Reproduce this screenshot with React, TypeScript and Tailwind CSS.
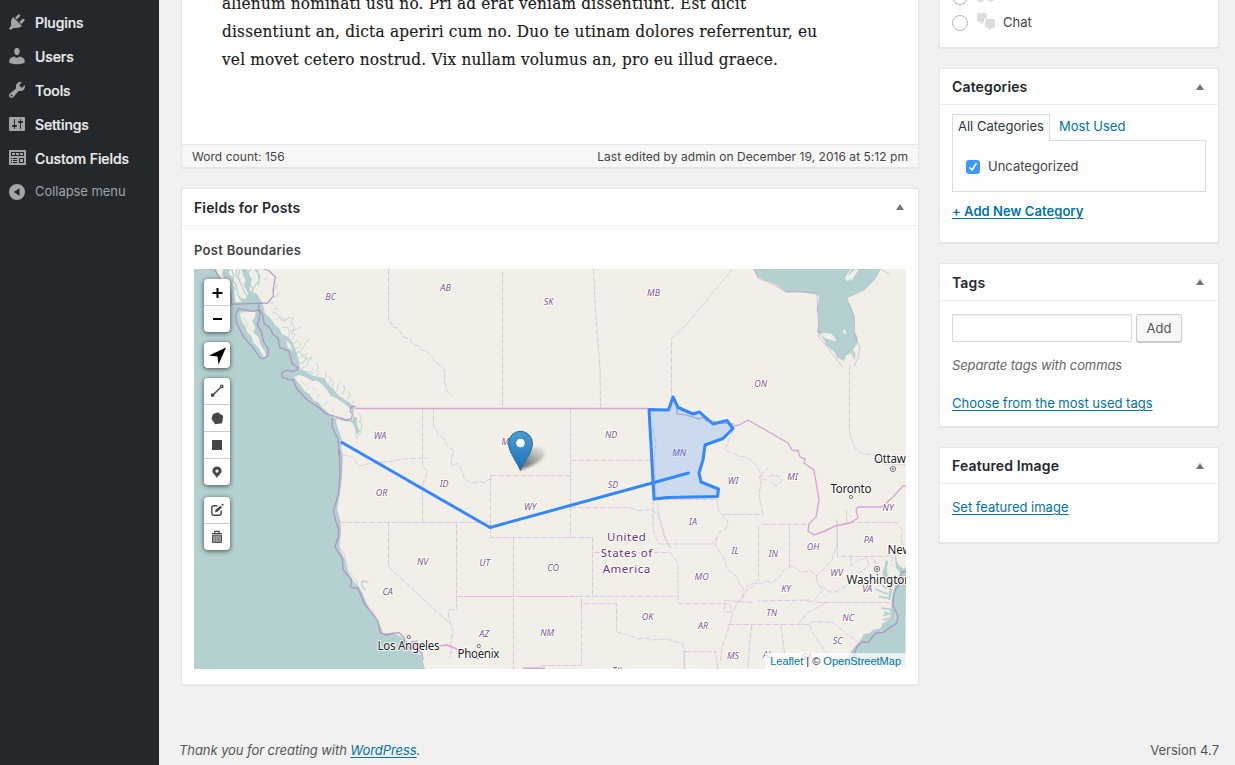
import React from "react";

type Kids = { children?: React.ReactNode };

const menu = [
  {
    label: "Plugins",
    d: "M13.11 4.36L9.87 7.6 8 5.73l3.24-3.24c.35-.34 1.05-.2 1.56.32.52.51.66 1.21.31 1.55zm-8 1.77l.91-1.12 9.01 9.01-1.19.84c-.71.71-2.63 1.16-3.82 1.16H6.14L4.9 17.26c-.59.59-1.54.59-2.12 0-.59-.58-.59-1.53 0-2.12l1.24-1.24v-3.88c0-1.13.4-3.19 1.09-3.89zm7.26 3.97l3.24-3.24c.34-.35 1.04-.21 1.55.31.52.51.66 1.21.31 1.55l-3.24 3.25z",
  },
  {
    label: "Users",
    d: "M10 9.25c-2.27 0-2.73-3.44-2.73-3.44C7 4.02 7.82 2 9.97 2c2.16 0 2.98 2.02 2.71 3.81 0 0-.41 3.44-2.68 3.44zM7.6 10.6C8.3 11.5 9.100 12 10 12s1.700-.5 2.400-1.400c3 .2 5.300 2.200 5.300 4.300v1.800s-3.400 1.500-7.700 1.500-7.700-1.500-7.700-1.500v-1.800c0-2.100 2.300-4.100 5.300-4.300z",
  },
  {
    label: "Tools",
    d: "M16.68 9.77c-1.34 1.34-3.3 1.67-4.95.99l-5.41 6.52c-.99.99-2.59.99-3.58 0s-.99-2.59 0-3.57l6.52-5.42c-.68-1.65-.35-3.61.99-4.95 1.28-1.28 3.12-1.62 4.72-1.06l-2.89 2.89 2.82 2.82 2.86-2.87c.53 1.58.18 3.39-1.08 4.65zM3.81 16.21c.4.39 1.04.39 1.43 0 .4-.4.4-1.04 0-1.43-.39-.4-1.03-.4-1.43 0-.39.39-.39 1.03 0 1.43z",
  },
  {
    label: "Settings",
    d: "M18 16V4c0-.55-.45-1-1-1H3c-.55 0-1 .45-1 1v12c0 .55.45 1 1 1h14c.55 0 1-.45 1-1zM8 11h1c.55 0 1 .45 1 1s-.45 1-1 1H8v1.5c0 .28-.22.5-.5.5s-.5-.22-.5-.5V13H6c-.55 0-1-.45-1-1s.45-1 1-1h1V5.5c0-.28.22-.5.5-.5s.5.22.5.5V11zm5-2h-1c-.55 0-1-.45-1-1s.45-1 1-1h1V5.5c0-.28.22-.5.5-.5s.5.22.5.5V7h1c.55 0 1 .45 1 1s-.45 1-1 1h-1v5.5c0 .28-.22.5-.5.5s-.5-.22-.5-.5V9z",
  },
  {
    label: "Custom Fields",
    d: "M2.5 2h16c.3 0 .5.2.5.5v14c0 .3-.2.5-.5.5h-16c-.3 0-.5-.2-.5-.5v-14c0-.3.2-.5.5-.5zM4 4v4h13V4zm1 1h3v2H5zm4 0h3v2H9zm4 0h3v2h-3zM4 10v1h1v-1zm2 0v1h4v-1zm-2 2v1h1v-1zm2 0v1h4v-1zm-2 2v1h1v-1zm2 0v1h4v-1zm6-4v5h5v-5zm1 1h3v3h-3z",
  },
];

const chatPath =
  "M11 6h-.82C9.07 6 8 7.2 8 8.16V10l-3 3v-3H3c-1.1 0-2-.9-2-2V3c0-1.1.9-2 2-2h6c1.1 0 2 .9 2 2v3zm0 1h6c1.1 0 2 .9 2 2v5c0 1.1-.9 2-2 2h-2v3l-3-3h-1c-1.1 0-2-.9-2-2V9c0-1.1.9-2 2-2z";

function Sidebar() {
  return (
    <nav className="h-full w-[159px] shrink-0 bg-[#23282d] pt-[5px] text-[14px] tracking-[-0.1px] text-[#eee]">
      {menu.map((m) => (
        <div key={m.label} className="flex h-[34px] items-center pl-[7px] font-medium [-webkit-text-stroke:0.2px]">
          <svg viewBox="0 0 20 20" className="mr-2 size-5 fill-[#a0a5aa] [-webkit-text-stroke:0]" fillRule="evenodd">
            <path d={m.d} />
          </svg>
          {m.label}
        </div>
      ))}
      <div className="flex h-[34px] items-center pl-[7px] text-[13px] tracking-[-0.05px] text-[#a0a5aa]">
        <svg viewBox="0 0 20 20" className="mr-2 size-5" fillRule="evenodd">
          <path fill="#a0a5aa" d="M10 2a8 8 0 1 1 0 16a8 8 0 0 1 0-16zM12.500 6.200L6.800 10L12.500 13.800z" />
        </svg>
        Collapse menu
      </div>
    </nav>
  );
}

function Card({ title, className, head, children }: Kids & { title: string; className: string; head: string }) {
  return (
    <section className={`border border-[#e5e5e5] bg-white shadow-[0_1px_1px_rgba(0,0,0,0.04)] ${className}`}>
      <header className={`flex items-center justify-between border-b border-[#eee] pr-[14px] pl-3 ${head}`}>
        <h2 className="text-[14px] font-semibold tracking-[0.14px] text-[#23282d]">{title}</h2>
        <svg viewBox="0 0 8 6" className="h-[6px] w-2 fill-[#72777c]">
          <path d="M4 0L8 6H0z" />
        </svg>
      </header>
      {children}
    </section>
  );
}

/* Map section drawn at three units per pixel with its own origin. */
function Tile({ x, y, children }: Kids & { x: number; y: number }) {
  return <g transform={`translate(${x} ${y}) scale(0.33333)`}>{children}</g>;
}

const states: [string, number, number][] = [
  ["BC", 331, 299.5], ["AB", 446, 291], ["SK", 549, 305], ["MB", 654, 296], ["ON", 761, 387],
  ["WA", 380.5, 438.5], ["OR", 382, 495.5], ["ID", 444.5, 487], ["MT", 508, 444.5], ["ND", 611.5, 438],
  ["SD", 613.5, 487.5], ["MN", 679.5, 455.5], ["WY", 530.5, 509.5], ["NV", 423, 564.5], ["CA", 388, 594.5],
  ["UT", 485, 565.5], ["CO", 553.5, 570.5], ["AZ", 484.5, 636.5], ["NM", 547.5, 635.5], ["OK", 648, 619.5],
  ["WI", 733.5, 484], ["MI", 793, 479.5], ["IA", 693.5, 524.5], ["IL", 735.5, 553.5], ["IN", 773.5, 556.5],
  ["OH", 813.5, 549.5], ["PA", 869, 542.5], ["NY", 888.5, 511], ["MO", 702, 579.5], ["KY", 786.5, 592],
  ["WV", 837, 575.5], ["VA", 867.5, 592], ["TN", 772, 616], ["NC", 848.5, 620.5], ["SC", 838, 643.5],
  ["AR", 703.5, 629], ["MS", 733.5, 659], ["AL", 768, 658], ["GA", 807, 659.5], ["TX", 617, 674],
];

const cities: [string, number, number, number][] = [
  ["Los Angeles", 408.5, 650.2, 62], ["Phoenix", 478.5, 658, 42], ["Toronto", 851, 493, 41],
  ["Washington", 879, 583.5, 65], ["Ottawa", 893, 463, 38], ["New York", 913, 554, 51],
];

function BaseMap() {
  return (
    <svg viewBox="194 269 712 400" className="absolute inset-0 size-full" fill="none">
      <rect x="194" y="269" width="712" height="400" fill="#f2efe9" />
      {/* Pacific */}
      <path
        fill="#b5d0d0"
        d="M194 269H247L252 279 249 290 257 294 262 302 265 313 271 319 276 326 282 331 288 337 293 343 296 351 299 361 300 370 307 374 314 377 322 379 326 384 332 390 338 395 344 399 351 404 354 409 353 416 357 418 357 426 360 431 357 435 354 426 352 422 344 421 336 419 337 426 340 434 342 440 341 450 343 455 342 477 340 493 337 510 340 520 341 530 339 547 345 560 347 570 353 581 357 585 362 592 367 604 370 611 376 618 381 627 383 633 393 633 401 637 408 642 415 650 421 656 425 669H194Z"
      />
      <Tile x={190} y={240}>
        <g fill="#f2efe9">
          <path d="M78 87l22 0-4 15 6 14-8 6-10-20zM120 87l35 0 4 18 8 14-4 20 12 22-10 16-18-5-5-23-15-15 6-18-18-14zM170 87l50 0 10 20 2 28-10 5 4 30-16 4-6-22-13-14 3-20-14-8zM132 145l12 8 2 18 10 15h-20zM148 218l24-3 25 0-2 16-9 11 10 21-6 14 15 14 7 24 13 20 3 15-8-2-14-24-17-18-4-17-14-14-7-19-10-14zM311 411l16-6 18 5 22 13 15-1 16 12 12 14 12 20 22 9 18 13 20 17 10 19-5 13-15 2-18-7-16 1-21-13-11-13-9-6-9-14-17-8-11-17-16-11-8-12z" />
          <path d="M226 150l12-10 7 17-10 22zM235 205l16 7-3 15-14-10zM245 230l16 10 7 18-17-8zM270 262l14 12 7 16-18-10zM288 300l14 14 5 20-14-13z" />
        </g>
        <g stroke="#b5d0d0" strokeWidth="2.4" strokeLinejoin="round">
          <path d="M113 90l8 25 18 20 5 30 12 20M125 87l6 20-8 12M140 87l-2 22 14 12M150 88l-6 25 14 30 16 35M180 87l-12 30 20 28-2 30M203 87l4 35-18 25M195 87l14 20-4 30M160 130l20 16M176 150l20 26" strokeWidth="3.500" />
          <path d="M232 115l-10 6M262 132l-6 14-10 8M247 172l14-4 5-12M240 190l12-5M248 208l10-4 8 6M246 216l18 8 8 14 16 8M260 240l12-10 6 6 14 4M286 243l8-10 17 1-9 12 10 16-6 22M276 262l17 0 7 20-8 14M300 275l22-8 15-8M302 300l8-6 6-14M306 312l18-10 8 8M312 326l16-4 6-10M316 338l20-8 9-20 16-14M322 336l20 10 12-5M318 355l20-8 10 12 20-9M326 372l18-8 6-16M332 386l18-8 5-16 11-7M345 396l20-2 5-10M353 404l20-6 12-14-4-14M378 408l9-7-5-12M400 420l8-10 0-14M414 436l8-14-3-13M423 446l9-17-4-8M440 455l4-20 8-6M455 465l10-18-6-12M470 480l10-14-5-11M484 496l8-14M496 508l9-6M505 520l8 8-4 20M508 540l8 12-4 26-8 12M500 560l-4 24 8 14" />
        </g>
        <path d="M332 390l34 20 35 8 10 17 18 16 18 25 26 12 20 17" stroke="#b5d0d0" strokeWidth="7" />
        <path d="M145 230l20 8 8 18-6 14M175 265l20 15M335 425l10 12 8-4M348 452l10-10M365 440l8 10 8-2M380 475l10-14M400 500l8-12 8 0M425 515l6-10" stroke="#c4dad7" strokeWidth="2.400" />
      </Tile>
      {/* San Francisco Bay */}
      <path d="M361 584l2-2.500M361.500 581l7 0M362 581v6l4 3M365 582l2 1" stroke="#b5d0d0" strokeWidth="1.200" />
      {/* Hudson Bay and the Atlantic */}
      <Tile x={660} y={260}>
        <path
          fill="#b5d0d0"
          d="M282 27l10 24 28 12 30 12 28 22 42-1 32 5 18 1 7 7-3 25-5 16 6 14 1 30-6 20 24 27 4 14 18 14 10 10 4 12 22 12 6-16 13-8 14 22 1-21-8-11 14-17 1-21-10-15 1-45-9-27-4-7-9-23 50-22 34-34 18-34 14-1-9-20z"
        />
        <path d="M480 224l12-6 22 3 10 11 4 12-27-7zM548 212l7-5 2 13-4 2zM554 218l5 2-1 6zM562 288l15-8-2 9zM554 54l18-27h4l-14 22 24-22h6l-24 29 20-27h8l-22 33h-4l4-8-12 10zM512 150l4 1-2 2z" fill="#f2efe9" />
        <path d="M663 27l25 16" stroke="#b5d0d0" strokeWidth="3" />
      </Tile>
      <Tile x={660} y={460}>
        <path
          fill="#b5d0d0"
          d="M738 320l-7 6-12-7-9-14-2-22-3 13 3 28 14 15-8 13-7 15-4 17-5 16-4 30 0 25-3 20-24 16-5 14-22 5-13 10-15 3-13 21-19 21-13 20-44 31h213z"
        />
        <path d="M681 302l-5 24 3 20 6 14 8 30-6 30M676 325l-5 14 8 18" stroke="#b5d0d0" strokeWidth="8" />
        <path d="M654 366l26 20M645 386l16 8 24 8M655 410l30 4M664 444l26 4 6 14M670 466l22-6M668 480l22-6M672 456l18 6" stroke="#b5d0d0" strokeWidth="5" />
        <path d="M699 436l9 20-2 20-15 15" stroke="#f2efe9" strokeWidth="1.500" />
      </Tile>

      {/* Province and state lines */}
      <g stroke="#dfc1de" strokeWidth="0.900" strokeDasharray="6 1.500">
        <path d="M388.5 269V322l3 1 1 4 5 1 3 4 3 5 6 2 4 6 6 1 3 4 5 2 5 5 3 5 4 3 5 5 0 12 3 10 4 4M502.5 272V408M593.5 269l1.5 33 2 30 3 36 .5 40M671.5 408V339l17-17 44-53" />
        <path d="M422.5 408V467l5 4-3 9-2 5V522M341 454l8 2 5 2 4 8 10-2 13-2 14-1 6-2 26-1M339 522.5H490.5M388.5 522.5V567l63 58M433.5 408.5v18l3 4 2 4 5 4 4 8 6 4-2 8 0 7 6-2 4 6 3 9 7 5 8-2 4 1 5-3 4 0M570.5 408V537M570.5 460.5H652M490.5 475.5H570M490.5 475V537.5H592.5M570 507.5h60l8 3 12-1 7 4 5 12 4 14 4 8M456.5 522V596.5H676M513.5 538V669M592.5 537V597M594 552.5H670l6 8 2 6V604M456.5 596V609l-7 1-1 6 2 8 3 8-3 10 1 8-2 8M456 596.5H581.5V603.5H616.5V632l9 2 8 3 5 2 8-1 6 2 8-1 10 1 12 4 2 9V669M581.5 603V665.5H540V669" />
        <path d="M653 429l3 15-2 16 2 35 2 4v11l3 14 4 15 6 9M657 499.5H716l4-10M653 499v31l6 14H712l5-7M717 499l1 10 5 7 5 6-2 7-8 4-3 12 9 14 4 11 8 6 4 9 4 5-2 8-5 6-4 8-3 11-4 14-4 10-2 17M724 514.5H763M763 524.5H809M763 514l-4-18 3-22 6-6M758.5 526V580l-6 7-6 3-4 8-5 3M789.5 526v42l-6 2-4 7-8 6-6-2-4 3-8-1-7 4M789 566l6 1 6 5 10-1 6 5 7-7 8-9 5-15V519M816 576l2 8 5 7-10 10-5 1-2-1 3-1-52 1M724 600.5l29 2M816 602.5H890M678 603.5H730l2 8-8 1M825 603l-8 5-10 5-8 11M728 624.5H809l4-3 20 1 13 11 14 10M751.5 625l-4 44M781 625l3 24 3 20M809 625l4 8 12 18 4 6M725 604l-1 8M684 652V669M684 651.500h32M718 669l-3-18" />
        <path d="M837.5 521v35M846.5 510V522.5H897l6 8-2 8 2 7-8 10-14 1H837M851 556l0 10 8-6 8-2 2 8-12 8-8 10-7 4-6 4-6 0-10-6M873 559l4 6M892 556v10M733 430l-8 20 14 6 9 2 8 7 5 9-2 4 7 2 5-5 7 1 4 4-5 6-7-4M849.5 364V434l6 15 5 4 14 2 10 9 22 1" />
      </g>
      {/* National and maritime lines */}
      <g stroke="#d5a7d3" strokeWidth="1.4">
        <path d="M355 408.5H649M734 426l5-1 9-5 40 23 4 7 5 1 1-1 2 7 5 2-1 4 10 7 1 6 4 24-3 17-7 7-1 7 6 4 11-4 10-5 15-3 8-5-2-8 2-3h24l11-10 10-11H906M405 647l32-1 10-1 28 11M447 645l32 14" />
        <path d="M523 668.5h22" strokeWidth="2" />
      </g>
      <g stroke="#a580b8" strokeOpacity=".7" strokeWidth="1.2">
        <path d="M677 404v10l9 1 7 2 6 2 4-2 3 4h6l8 2 14 1" />
        <Tile x={190} y={240}>
          <g strokeWidth="4">
            <path d="M72 87l20 30 30 40 3 36 108-4 17-22 0-22 6-34-18-18-23-9M205 190l2 18 10 12 5 30 17 13 10 20 16 13 4 26 28 12 9 36 20 14-14 10-25-3-12 8 1 12 20 8 14 0 10 27 32 34 34 22 20 18 32 10 31 10 15-4 4-13-8-10 3-13 14-1M145 205l22 5 22 4 15-4 6 7-3 23-5 15 13 22 5 27 16 26-3 17-12 9-12-3-22-33-25-27-21-41-5-22z" />
            <path d="M427 533l-1 24 7 20 11 19 4 50" />
          </g>
        </Tile>
        <Tile x={190} y={450}>
          <path strokeWidth="4" d="M448 0l2 70-5 65-15 46 8 35 8 22-2 26-9 25 10 20 12 16 2 34 26 30-4 20 10 6 12-2 9 20 10 28 18 21 24 31 6 34 18 8 24-6 16 0 16 16-3 12 9 13 14 4 8-8-7-10 16-2 1 25 14 12 3 20" />
          <path strokeWidth="2" d="M455 0l-2 90-16 84 13 50 0 35-6 25 19 30 10 46 22 26 9 20 16 43 29 38 20 43" stroke="#b9a4c8" />
        </Tile>
        <Tile x={660} y={460}>
          <path strokeWidth="4" d="M738 334l-14 2-4 34-12 14-4 14-5 20 1 20 14 31-3 20-26 17-14 11-22 2-12 12-13 16-18-1-15 14-10 28-21 11-22 28" />
        </Tile>
        <path d="M754 269l4 9 10 4 8 4 10 6 22 0 9 2 1 21 1 21M848 303l6 13 1 20 5 12-2 10-4 8M817 335l8 9 6 8 7 9 5 6" strokeOpacity=".5" strokeWidth=".8" />
      </g>

      {/* Labels */}
      <g fontFamily="'Noto Sans','Open Sans',sans-serif" textAnchor="middle" paintOrder="stroke" strokeLinejoin="round" stroke="#fff" strokeOpacity=".85">
        <g fontSize="9" fontStyle="italic" strokeWidth="2.2" fill="#85578a" transform="translate(-0.4 0)">
          {states.map(([t, x, y]) => (
            <text key={t} x={x} y={y}>{t}</text>
          ))}
        </g>
        <g fontSize="11.5" letterSpacing=".55" strokeWidth="2" fill="#6f3575">
          <text x="626.7" y="541">United</text>
          <text x="626.7" y="557">States of</text>
          <text x="626.7" y="573">America</text>
        </g>
        <g fontSize="11.7" strokeWidth="2.2" fill="#222">
          {cities.map(([t, x, y, w]) => (
            <text key={t} x={x} y={y} textLength={w}>{t}</text>
          ))}
        </g>
      </g>
      <g fill="#fff" stroke="#555" strokeWidth=".8">
        <circle cx="408.8" cy="637" r="1.6" />
        <circle cx="478.8" cy="646" r="1.6" />
        <circle cx="851" cy="497" r="1.6" />
        <circle cx="893" cy="469" r="2.6" />
        <circle cx="893" cy="469" r=".8" />
        <circle cx="877" cy="569" r="2.6" />
        <circle cx="877" cy="569" r=".8" />
      </g>

      {/* Drawn boundaries */}
      <g stroke="#3388ff" strokeWidth="3" strokeLinecap="round" strokeLinejoin="round">
        <path
          fill="#3388ff"
          fillOpacity=".2"
          d="M649 409.5l19.500 .5 4.500-13 5 10.500 15 6.500 6.500-2 13.500 12 14-3.500 6 8-10 10-18 6.500-2 15-4 13 2 9 17.500 7-1 7.500-50 1-13.500 1.500z"
        />
        <path d="M342 442.500L490 527.500 688.500 473" />
      </g>

      {/* Marker */}
      <defs>
        <linearGradient id="pin" x1="0" y1="0" x2="0" y2="1">
          <stop offset="0" stopColor="#4b9cd0" />
          <stop offset="1" stopColor="#1c70bd" />
        </linearGradient>
        <linearGradient id="shade" x1="0" y1="1" x2=".8" y2="0">
          <stop offset="0" stopColor="#000" stopOpacity=".65" />
          <stop offset="1" stopColor="#000" stopOpacity=".04" />
        </linearGradient>
        <filter id="soft" x="-30%" y="-30%" width="160%" height="160%">
          <feGaussianBlur stdDeviation="1.5" />
        </filter>
      </defs>
      <path d="M520 470C526 460 525 449 535 447C546 446 548 454 541 460C535 465 527 467 520 470z" fill="url(#shade)" filter="url(#soft)" />
      <path
        d="M520.500 470.500C518 464 508.500 452 508.500 443.300A12 12 0 0 1 532.500 443.300C532.500 452 523 464 520.500 470.500z"
        fill="url(#pin)"
        stroke="#2e6c97"
        strokeWidth="1"
      />
      <circle cx="520.500" cy="443" r="4.600" fill="#fff" stroke="#2e7cb4" strokeWidth=".6" />
    </svg>
  );
}

function Bar({ children }: Kids) {
  return (
    <div className="w-[26px] divide-y divide-[#ccc] rounded-[4px] bg-white shadow-[0_1px_5px_rgba(0,0,0,0.65)]">
      {children}
    </div>
  );
}

function Tool({ children }: Kids) {
  return (
    <div className="h-[27px] w-[26px] last:h-[26px]">
      <svg viewBox="0 0 26 26" className="h-[26px] w-[26px]" fill="none">
        {children}
      </svg>
    </div>
  );
}

function Controls() {
  return (
    <div className="absolute top-[10px] left-[10px] flex flex-col">
      <Bar>
        <Tool><path d="M13.500 9v10M8.500 14h10" stroke="#000" strokeWidth="2" /></Tool>
        <Tool><path d="M9 13h9" stroke="#000" strokeWidth="2" /></Tool>
      </Bar>
      <div className="h-[10px]" />
      <Bar>
        <Tool><path d="M22 5.500L5 13.500l8.500 1L14.500 22.500z" fill="#000" /></Tool>
      </Bar>
      <div className="h-[10px]" />
      <Bar>
        <Tool>
          <g stroke="#464646" strokeWidth="1.200">
            <path d="M9 17l8-8" strokeWidth="1.400" />
            <rect x="7.600" y="16.100" width="2" height="2" fill="#fff" />
            <rect x="16.800" y="7.400" width="2" height="2" fill="#fff" />
          </g>
        </Tool>
        <Tool><path d="M13.800 7.300l5.400 3.700-1.200 7.300-6.800 1-3.700-5.300 1.300-4.800z" fill="#464646" /></Tool>
        <Tool><path d="M8 8h10v10H8z" fill="#464646" /></Tool>
        <Tool><path fillRule="evenodd" d="M13 7.500a4.600 4.600 0 0 1 4.600 4.600c0 2.700-3.200 4-4.600 6.900-1.400-2.900-4.600-4.200-4.600-6.900A4.600 4.600 0 0 1 13 7.500zm0 3a1.600 1.600 0 1 0 0 3.200 1.600 1.600 0 0 0 0-3.200z" fill="#464646" /></Tool>
      </Bar>
      <div className="h-3" />
      <Bar>
        <Tool>
          <path d="M13.500 8.800H10a2.200 2.200 0 0 0-2.200 2.200v5A2.200 2.200 0 0 0 10 18.200h5A2.200 2.200 0 0 0 17.200 16v-2.500" stroke="#464646" strokeWidth="1.400" />
          <path d="M11 15.200l.5-2.500 5-4 1.500 1.500-4.500 4.500z" fill="#464646" />
          <circle cx="18.600" cy="7.700" r="1" fill="#464646" />
        </Tool>
        <Tool>
          <path d="M8 9.500h10M10.800 9V7.400h4.400V9" stroke="#464646" strokeWidth="1.200" />
          <path d="M8.500 11h9v7.500h-9z" fill="#999" stroke="#464646" strokeWidth=".9" />
          <path d="M11.300 11v7M14.700 11v7" stroke="#777" strokeWidth=".8" />
        </Tool>
      </Bar>
    </div>
  );
}

const link = "text-[#0073aa] underline decoration-1 underline-offset-2";

export default function App() {
  return (
    <div className="flex h-[765px] w-[1235px] overflow-hidden bg-[#f1f1f1] font-['Inter','Liberation_Sans',sans-serif] text-[13px] text-[#444]">
      <Sidebar />
      <div className="flex w-[1076px] flex-col">
        <main className="flex gap-5 pl-[22px]">
          <div className="w-[738px]">
            <section className="h-[168px] overflow-hidden border border-t-0 border-[#e5e5e5] bg-white shadow-[0_1px_1px_rgba(0,0,0,0.04)]">
              <div className="flex h-[144px] flex-col overflow-hidden pl-10 font-['DejaVu_Serif_Condensed','DejaVu_Serif',serif] text-[17px] leading-[28px] tracking-[0.22px] whitespace-nowrap text-[#1a1a1a] [-webkit-text-stroke:0.15px]">
                <p className="-mt-[11px]">alienum nominati usu no. Pri ad erat veniam dissentiunt. Est dicit</p>
                <p>dissentiunt an, dicta aperiri cum no. Duo te utinam dolores referrentur, eu</p>
                <p>vel movet cetero nostrud. Vix nullam volumus an, pro eu illud graece.</p>
              </div>
              <div className="flex h-[24px] items-center justify-between border-t border-[#e5e5e5] bg-[#f7f7f7] px-[10px] pt-px text-[12px] tracking-[0.04px]">
                <span>Word count: 156</span>
                <span>Last edited by admin on December 19, 2016 at 5:12 pm</span>
              </div>
            </section>
            <Card title="Fields for Posts" className="mt-5 h-[497px]" head="h-[37px]">
              <div className="px-3 pt-[14px]">
                <h3 className="h-[29px] text-[13px] leading-5 font-semibold tracking-[0.3px]">Post Boundaries</h3>
                <div className="relative h-[400px] w-[712px] overflow-hidden">
                  <BaseMap />
                  <Controls />
                  <div className="absolute right-0 bottom-0 h-4 bg-white/70 px-[5px] font-['Liberation_Sans',sans-serif] text-[11px] leading-4 whitespace-nowrap text-[#333]">
                    <span className="text-[#0078a8]">Leaflet</span> | © <span className="text-[#0078a8]">OpenStreetMap</span>
                  </div>
                </div>
              </div>
            </Card>
          </div>

          <aside className="w-[280px]">
            <section className="h-12 overflow-hidden border border-t-0 border-[#e5e5e5] bg-white shadow-[0_1px_1px_rgba(0,0,0,0.04)]">
              <div className="-mt-[15px] flex h-[24px] items-center pl-3">
                <span className="size-4 rounded-full border border-[#b4b9be] bg-white" />
                <svg viewBox="0 0 20 20" className="ml-2 size-5 fill-[#ddd]">
                  <circle cx="4.500" cy="12.500" r="3" />
                  <circle cx="15" cy="11.800" r="3" />
                </svg>
              </div>
              <div className="flex h-[28px] items-center pl-3">
                <span className="size-4 rounded-full border border-[#b4b9be] bg-white" />
                <svg viewBox="0 0 20 20" className="-mt-[3px] mr-[7px] ml-2 size-5 fill-[#ddd]">
                  <path d={chatPath} />
                </svg>
                Chat
              </div>
            </section>

            <Card title="Categories" className="mt-5 h-[175px]" head="h-[36px]">
              <div className="px-3 pt-[9px]">
                <div className="flex">
                  <div className="z-10 -mb-px h-[27px] w-[98px] border border-b-0 border-[#ddd] bg-[#fdfdfd] pl-[5px] leading-[23px] whitespace-nowrap text-[#32373c]">
                    All Categories
                  </div>
                  <div className="pl-[9px] leading-[25px] text-[#0073aa]">Most Used</div>
                </div>
                <div className="flex h-[52px] items-center border border-[#ddd] bg-[#fdfdfd] pt-[2px] pl-[13px]">
                  <svg viewBox="0 0 14 14" className="mr-2 size-[14px]">
                    <rect width="14" height="14" rx="3" fill="#3b99fc" />
                    <path d="M3.500 7.500L6 10l4.500-7" fill="none" stroke="#fff" strokeWidth="1.600" />
                  </svg>
                  Uncategorized
                </div>
                <div className={`mt-[9px] leading-5 font-semibold tracking-[0.05px] ${link}`}>+ Add New Category</div>
              </div>
            </Card>

            <Card title="Tags" className="mt-5 h-[164px]" head="h-[37px]">
              <div className="px-3 pt-[13px]">
                <div className="flex gap-1">
                  <div className="h-7 w-[180px] border border-[#ddd] bg-white shadow-[inset_0_1px_2px_rgba(0,0,0,0.07)]" />
                  <div className="h-7 w-[46px] rounded-[3px] border border-[#ccc] bg-[#f7f7f7] text-center leading-[26px] text-[#555] shadow-[0_1px_0_#ccc]">
                    Add
                  </div>
                </div>
                <p className="mt-[13px] leading-5 tracking-[-0.1px] text-[#666] italic">Separate tags with commas</p>
                <p className={`mt-[18px] leading-5 ${link}`}>Choose from the most used tags</p>
              </div>
            </Card>

            <Card title="Featured Image" className="mt-5 h-[96px]" head="h-[36px]">
              <p className={`px-3 pt-[13px] leading-5 ${link}`}>Set featured image</p>
            </Card>
          </aside>
        </main>
        <footer className="mt-auto mb-[4px] flex h-5 items-center justify-between pr-4 pl-[21px] text-[#555]">
          <span className="-ml-px tracking-[-0.07px] italic">
            Thank you for creating with <span className={link}>WordPress</span>.
          </span>
          <span>Version 4.7</span>
        </footer>
      </div>
    </div>
  );
}
